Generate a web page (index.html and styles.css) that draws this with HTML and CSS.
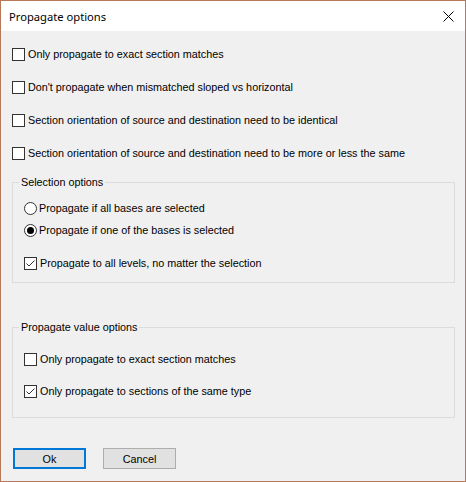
FILE: index.html
```html
<!DOCTYPE html>
<html lang="en">
<head>
    <meta charset="UTF-8">
    <title>Propagate options</title>
    <link rel="stylesheet" href="styles.css">
</head>
<body>
    <div class="dialog">
        <div class="titlebar">
            <span class="title">Propagate options</span>
            <svg class="close" width="11" height="11" viewBox="0 0 11 11">
                <path d="M0.5 0.5 L10.5 10.5 M10.5 0.5 L0.5 10.5" stroke="#000" stroke-width="1" fill="none"/>
            </svg>
        </div>
        <div class="content">
            <label class="opt first"><span class="box"></span>Only propagate to exact section matches</label>
            <label class="opt"><span class="box"></span>Don't propagate when mismatched sloped vs horizontal</label>
            <label class="opt"><span class="box"></span>Section orientation of source and destination need to be identical</label>
            <label class="opt"><span class="box"></span>Section orientation of source and destination need to be more or less the same</label>

            <fieldset class="group selection">
                <legend>Selection options</legend>
                <label class="opt radio-row top"><span class="radio"></span>Propagate if all bases are selected</label>
                <label class="opt radio-row"><span class="radio on"></span>Propagate if one of the bases is selected</label>
                <label class="opt spaced"><span class="box on"><svg width="11" height="11" viewBox="0 0 11 11"><path d="M1.5 5.5 L4 8 L9.5 2.5" stroke="#333" stroke-width="1" fill="none"/></svg></span>Propagate to all levels, no matter the selection</label>
            </fieldset>

            <fieldset class="group values">
                <legend>Propagate value options</legend>
                <label class="opt"><span class="box"></span>Only propagate to exact section matches</label>
                <label class="opt"><span class="box on"><svg width="11" height="11" viewBox="0 0 11 11"><path d="M1.5 5.5 L4 8 L9.5 2.5" stroke="#333" stroke-width="1" fill="none"/></svg></span>Only propagate to sections of the same type</label>
            </fieldset>

            <div class="buttons">
                <button class="btn default">Ok</button>
                <button class="btn">Cancel</button>
            </div>
        </div>
    </div>
</body>
</html>
```

FILE: styles.css
```css
body {
    margin: 0;
    font-family: "Liberation Sans", Arial, sans-serif;
    font-size: 10.8px;
    color: #000;
}

.dialog {
    width: 466px;
    height: 482px;
    box-sizing: border-box;
    border: 1px solid #b7785a;
    background: #f0f0f0;
    display: flex;
    flex-direction: column;
}

.titlebar {
    height: 30px;
    background: #fff;
    display: flex;
    align-items: center;
    justify-content: space-between;
    padding: 0 11px 0 8px;
}

.title {
    font-family: "Noto Sans", sans-serif;
    font-size: 11.2px;
}

.close {
    display: block;
}

.content {
    flex: 1;
    padding: 0 10px 0 11px;
}

.opt {
    display: flex;
    align-items: center;
    height: 14px;
    line-height: 14px;
    margin-top: 19px;
    white-space: nowrap;
}

.opt.first {
    margin-top: 16px;
}

.box {
    width: 13px;
    height: 13px;
    box-sizing: border-box;
    border: 1px solid #333;
    background: #fff;
    margin-right: 3px;
    flex: none;
    display: flex;
    align-items: center;
    justify-content: center;
}

.box svg {
    display: block;
}

.radio {
    width: 13px;
    height: 13px;
    box-sizing: border-box;
    border: 1px solid #333;
    border-radius: 50%;
    background: #fff;
    margin-right: 2px;
    flex: none;
    display: flex;
    align-items: center;
    justify-content: center;
}

.radio.on::after {
    content: "";
    width: 7px;
    height: 7px;
    border-radius: 50%;
    background: #000;
}

.group {
    margin: 15px 0 0 0;
    padding: 0;
    border: 1px solid #dcdcdc;
    min-width: 0;
    box-sizing: border-box;
}

.group legend {
    margin-left: 6px;
    padding: 0 2px;
    line-height: 14px;
}

.group .opt {
    margin-left: 11px;
}

.selection {
    height: 108px;
}

.selection .radio-row {
    margin-top: 8px;
}

.selection .radio-row.top {
    margin-top: 12px;
}

.selection .spaced {
    margin-top: 19px;
}

.values {
    margin-top: 37px;
    height: 98px;
}

.values .opt {
    margin-top: 18px;
}

.buttons {
    display: flex;
    gap: 17px;
    margin-top: 30px;
    padding-left: 1px;
}

.btn {
    width: 73px;
    height: 21px;
    box-sizing: border-box;
    background: #e1e1e1;
    border: 1px solid #adadad;
    font-family: "Liberation Sans", Arial, sans-serif;
    font-size: 10.8px;
    color: #000;
    padding: 0;
}

.btn.default {
    border: 2px solid #0078d7;
}
```
